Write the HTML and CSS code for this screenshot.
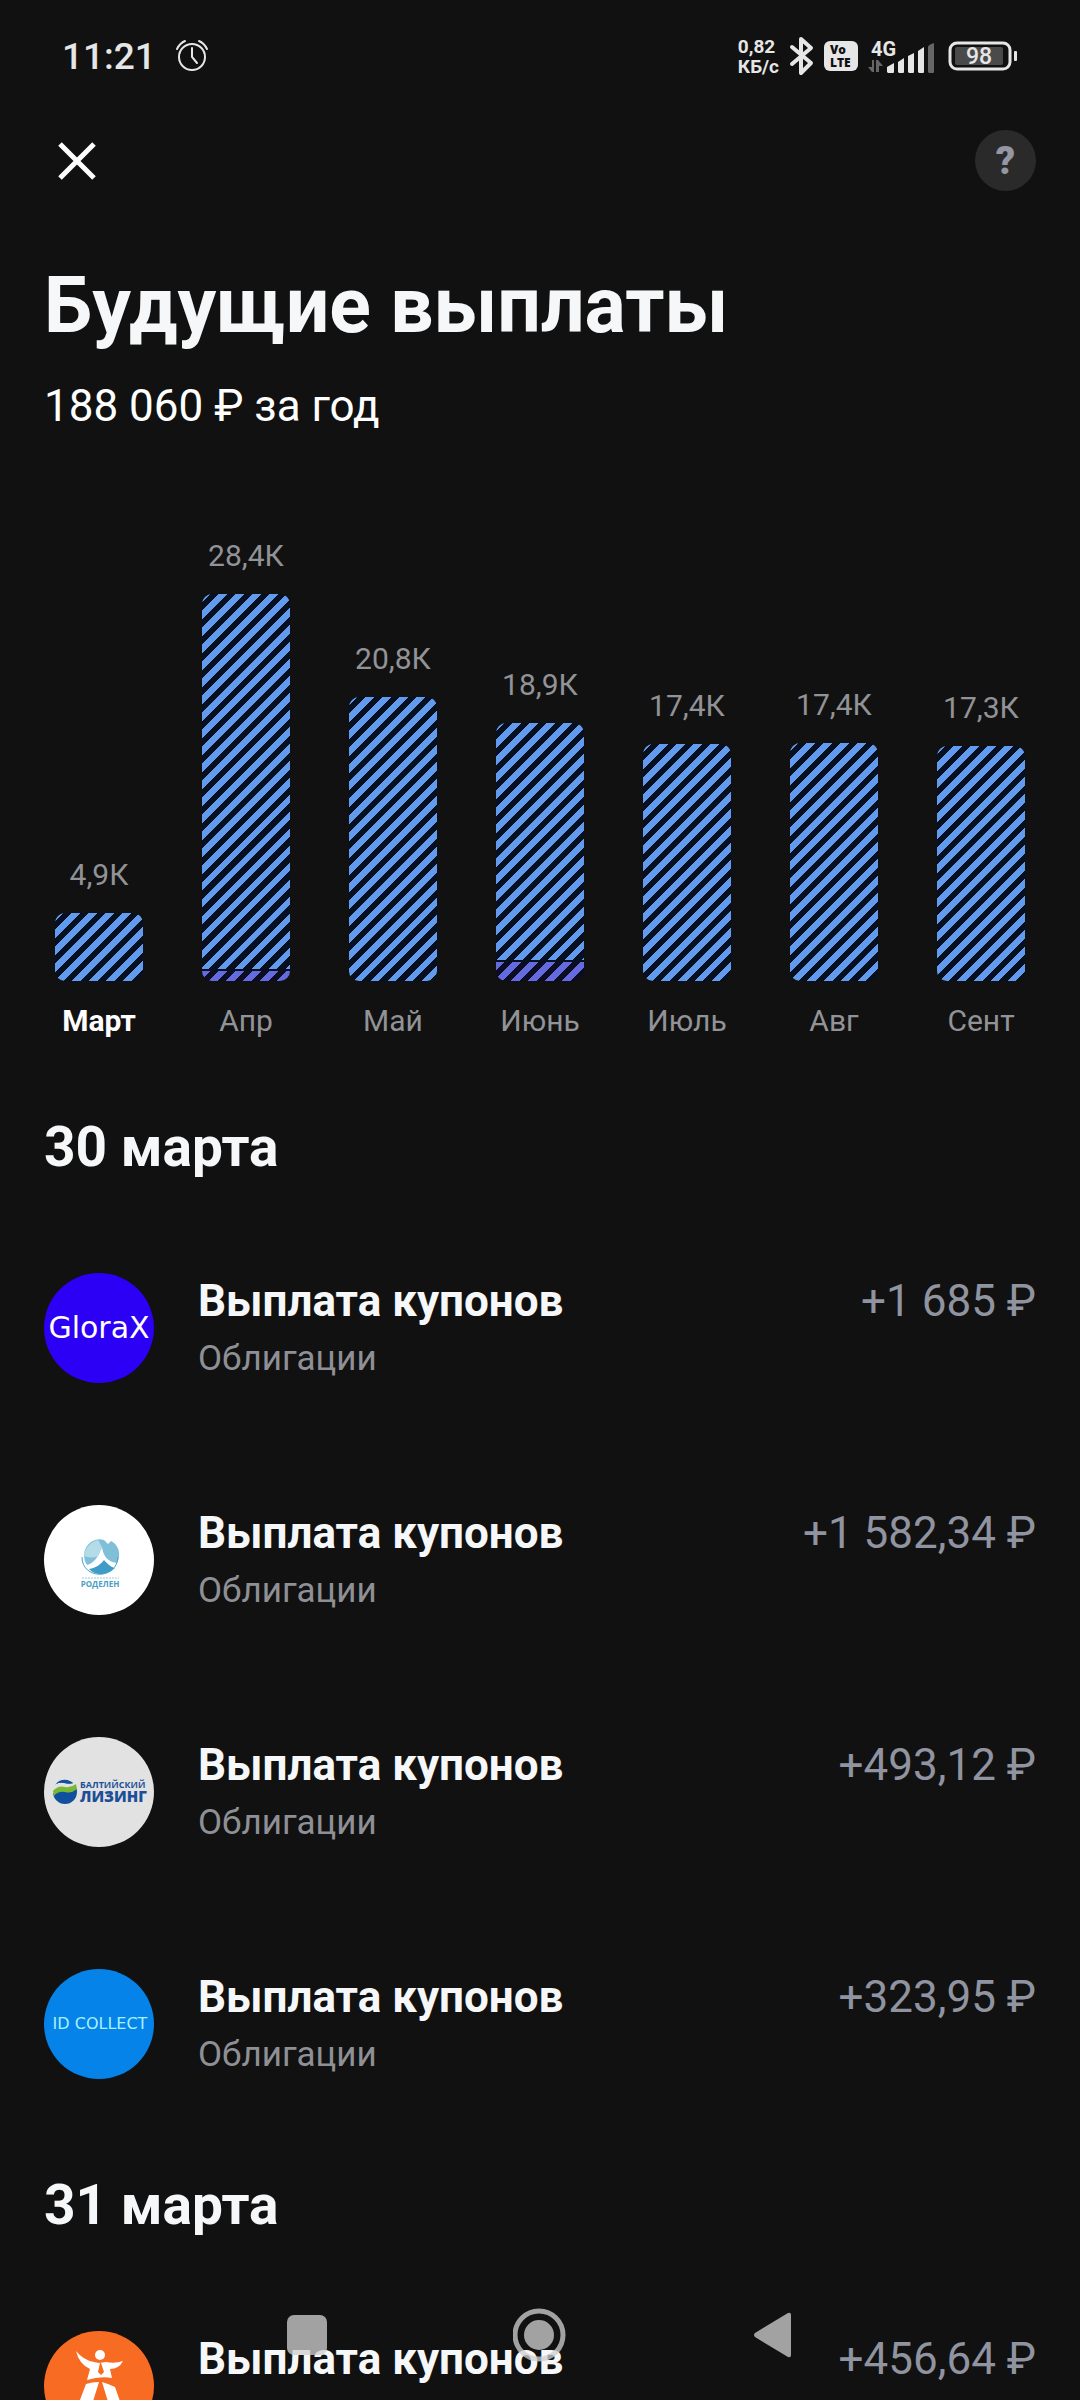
FILE: index.html
```html
<!DOCTYPE html>
<html lang="ru">
<head>
    <meta charset="UTF-8">
    <meta name="viewport" content="width=device-width, initial-scale=1.0">
    <title>Будущие выплаты</title>
    <link rel="stylesheet" href="styles.css">
</head>
<body>
<div class="app">
    <div class="status">
        <span class="clock">11:21</span>
        <svg class="alarm" width="34" height="34" viewBox="0 0 34 34" fill="none" stroke="#e6e6e6" stroke-width="2" stroke-linecap="round">
            <circle cx="17" cy="18" r="13"/>
            <path d="M17 9v9l5 6M2 10Q5 4 10 2M32 10Q29 4 24 2"/>
        </svg>
        <span class="speed">0,82<br>КБ/с</span>
        <svg class="bluetooth" width="26" height="40" viewBox="0 0 26 40" fill="none" stroke="#e6e6e6" stroke-width="4" stroke-linejoin="round" stroke-linecap="round">
            <path d="M3 11l19 16-10 10V3l10 9L3 28"/>
        </svg>
        <span class="volte">Vo<br>LTE</span>
        <svg class="signal" width="68" height="36" viewBox="0 0 68 36">
            <text class="signal-text" x="3" y="18">4G</text>
            <path fill="#666" d="M0 29l4 5h2V22H4v7zM8 34V22h2l5 6h-4v6z"/>
            <path fill="#e6e6e6" d="M19 34v-5l7-4v9a1 1 0 0 1-1 1h-5zM30 34V24l6-4v14a1 1 0 0 1-1 1h-4zM40 34V18l6-3v19a1 1 0 0 1-1 1h-4zM50 34V13l6-4v25a1 1 0 0 1-1 1h-4z"/>
            <path fill="#666" d="M60 34V9q0-2 6-4v29a1 1 0 0 1-1 1h-4z"/>
        </svg>
        <svg class="battery" width="70" height="30" viewBox="0 0 70 30">
            <rect x="2" y="2" width="60" height="26" rx="7" fill="none" stroke="#e6e6e6" stroke-width="3"/>
            <rect x="7" y="6" width="48" height="18" rx="2" fill="#4a4a4a"/>
            <rect x="66" y="10" width="3" height="10" rx="1" fill="#e6e6e6"/>
            <text class="battery-text" x="31" y="23" text-anchor="middle">98</text>
        </svg>
    </div>

    <header class="toolbar">
        <button class="close" type="button" aria-label="Закрыть">
            <svg width="38" height="38" viewBox="0 0 38 38" stroke="#fff" stroke-width="5"><path d="M2 2l34 34M36 2L2 36"/></svg>
        </button>
        <button class="help" type="button">?</button>
    </header>

    <main>
        <h1>Будущие выплаты</h1>
        <p class="total">188 060 ₽ за год</p>

        <ul class="chart">
            <li class="month current">
                <span class="value">4,9К</span>
                <div class="bar" style="height: 68px"><i class="coupons"></i></div>
                <span class="name">Март</span>
            </li>
            <li class="month">
                <span class="value">28,4К</span>
                <div class="bar" style="height: 387px"><i class="coupons"></i><i class="dividends" style="height: 10px"></i></div>
                <span class="name">Апр</span>
            </li>
            <li class="month">
                <span class="value">20,8К</span>
                <div class="bar" style="height: 284px"><i class="coupons"></i></div>
                <span class="name">Май</span>
            </li>
            <li class="month">
                <span class="value">18,9К</span>
                <div class="bar" style="height: 258px"><i class="coupons"></i><i class="dividends" style="height: 19px"></i></div>
                <span class="name">Июнь</span>
            </li>
            <li class="month">
                <span class="value">17,4К</span>
                <div class="bar" style="height: 237px"><i class="coupons"></i></div>
                <span class="name">Июль</span>
            </li>
            <li class="month">
                <span class="value">17,4К</span>
                <div class="bar" style="height: 238px"><i class="coupons"></i></div>
                <span class="name">Авг</span>
            </li>
            <li class="month">
                <span class="value">17,3К</span>
                <div class="bar" style="height: 235px"><i class="coupons"></i></div>
                <span class="name">Сент</span>
            </li>
        </ul>

        <section>
            <h2>30 марта</h2>
            <ul class="payments">
                <li class="payment">
                    <svg class="logo" viewBox="0 0 110 110">
                        <circle cx="55" cy="55" r="55" fill="#2c00f5"/>
                        <text class="logo-glorax" x="55" y="65" text-anchor="middle">GloraX</text>
                    </svg>
                    <div class="info">
                        <h3>Выплата купонов</h3>
                        <p>Облигации</p>
                    </div>
                    <span class="amount">+1 685 ₽</span>
                </li>
                <li class="payment">
                    <svg class="logo" viewBox="0 0 110 110">
                        <circle cx="55" cy="55" r="55" fill="#fff"/>
                        <path fill="#7fbfd8" d="M60 35C50 32 40 40 40 51q0 5 3 9c8-2 12-10 15-18 1 8 5 15 15 16 5-9 1-19-6-22l-3 3z"/>
                        <path fill="#b3dbe8" d="M40 51c1-9 8-15 14-16l4 7-4 9q-6 3-14 0z"/>
                        <path fill="#3f9cc6" d="M45 64c7-1 12-5 15-9 3 3 6 7 11 8-8 8-20 8-26 1z"/>
                        <path fill="none" stroke="#4aa3c9" d="M38 52c0 23 35 23 36 0"/>
                        <path stroke="#9acbdc" stroke-dasharray="2 1" d="M38 73h37"/>
                        <text class="logo-rodelen" x="56" y="82" text-anchor="middle">РОДЕЛЕН</text>
                    </svg>
                    <div class="info">
                        <h3>Выплата купонов</h3>
                        <p>Облигации</p>
                    </div>
                    <span class="amount">+1 582,34 ₽</span>
                </li>
                <li class="payment">
                    <svg class="logo" viewBox="0 0 110 110">
                        <circle cx="55" cy="55" r="55" fill="#e2e2e3"/>
                        <circle cx="21" cy="55" r="12" fill="#124f9d"/>
                        <path fill="#e2e2e3" d="M8 51q5-7 13-5 6 2 11-1l1 5q-6 5-12 3-7-2-12 4z"/>
                        <path fill="#124f9d" d="M12 47q4-5 11-4 3 1 6 3-5 1-9 0-4-1-8 1z"/>
                        <path fill="#78b833" d="M9 54q5-6 12-4 6 1 11-3l1 5q-6 5-12 3-7-1-11 4z"/>
                        <text class="logo-baltic" x="36" y="51">БАЛТИЙСКИЙ</text>
                        <text class="logo-leasing" x="36" y="65">ЛИЗИНГ</text>
                    </svg>
                    <div class="info">
                        <h3>Выплата купонов</h3>
                        <p>Облигации</p>
                    </div>
                    <span class="amount">+493,12 ₽</span>
                </li>
                <li class="payment">
                    <svg class="logo" viewBox="0 0 110 110">
                        <circle cx="55" cy="55" r="55" fill="#0583e8"/>
                        <text class="logo-collect" x="56" y="60" text-anchor="middle">ID COLLECT</text>
                    </svg>
                    <div class="info">
                        <h3>Выплата купонов</h3>
                        <p>Облигации</p>
                    </div>
                    <span class="amount">+323,95 ₽</span>
                </li>
            </ul>
        </section>

        <section>
            <h2>31 марта</h2>
            <ul class="payments">
                <li class="payment">
                    <svg class="logo" viewBox="0 0 110 110">
                        <circle cx="55" cy="55" r="55" fill="#f86b22"/>
                        <circle cx="56" cy="24" r="5" fill="#fff"/>
                        <path fill="#fff" d="M32 20q7 9 18 11l5 1 7-1q9 2 17-1-4 8-13 8l2 9q-12-2-25 2l3-11Q35 33 32 20z"/>
                        <path fill="#f86b22" d="M56 32l-2 9 3 3 3-3-3-9z"/>
                        <path fill="#fff" d="M42 53q6-2 13-2L43 90H28zM58 51q7 2 13 5l12 34H70z"/>
                    </svg>
                    <div class="info">
                        <h3>Выплата купонов</h3>
                        <p>Облигации</p>
                    </div>
                    <span class="amount">+456,64 ₽</span>
                </li>
            </ul>
        </section>
    </main>
</div>

<!-- Системная навигация поверх списка -->
<nav class="system-nav">
    <button type="button" aria-label="Недавние">
        <svg width="54" height="54" viewBox="0 0 54 54"><rect x="6" y="7" width="40" height="40" rx="7"/></svg>
    </button>
    <button type="button" aria-label="Домой">
        <svg width="54" height="54" viewBox="0 0 54 54"><circle class="ring" cx="26" cy="27" r="24"/><circle cx="26" cy="27" r="15"/></svg>
    </button>
    <button type="button" aria-label="Назад">
        <svg width="54" height="54" viewBox="0 0 54 54"><path d="M10 25L43 5q3-1 3 2v40q0 3-3 2L10 29q-2-2 0-4z"/></svg>
    </button>
</nav>
</body>
</html>
```
FILE: styles.css
```css
* {
    box-sizing: border-box;
}

body {
    margin: 0;
    background-color: #111;
    color: #f6f7f8;
    font-family: Roboto, sans-serif;
}

h1, h2, h3, p, ul {
    margin: 0;
    padding: 0;
}

ul {
    list-style: none;
}

button {
    padding: 0;
    border: none;
    background: none;
    cursor: pointer;
}

svg {
    display: block;
    flex-shrink: 0;
}

.app {
    height: 100vh;
    overflow: hidden;
}

/* Статус-бар */
.status {
    display: flex;
    align-items: center;
    height: 112px;
    padding: 0 62px;
    color: #e6e6e6;
}

.clock {
    font-size: 37px;
    font-weight: 500;
}

.alarm {
    margin-left: 19px;
}

.speed {
    margin-left: auto;
    padding-top: 2px;
    font-size: 19px;
    font-weight: 700;
    line-height: 20px;
}

.bluetooth {
    margin-left: 10px;
}

.volte {
    width: 34px;
    height: 30px;
    margin-left: 9px;
    padding: 2px 0 0 6px;
    border-radius: 6px;
    background-color: #e6e6e6;
    color: #111;
    font-family: "Open Sans", sans-serif;
    font-size: 12px;
    font-weight: 800;
    line-height: 13px;
}

.signal {
    margin-left: 10px;
}

.signal-text {
    fill: #e6e6e6;
    font-size: 20px;
    font-weight: 700;
}

.battery {
    margin-left: 12px;
}

.battery-text {
    fill: #e6e6e6;
    font-size: 23px;
    font-weight: 500;
}

.toolbar {
    display: flex;
    align-items: center;
    justify-content: space-between;
    height: 97px;
    padding: 0 44px 0 58px;
}

.help {
    width: 61px;
    height: 61px;
    border-radius: 50%;
    background-color: #2a2a2a;
    color: #9497a3;
    font: 900 38px Roboto, sans-serif;
}

main {
    padding: 47px 44px 0;
}

h1 {
    font-size: 77px;
    line-height: 100px;
}

.total {
    padding-top: 20px;
    color: #fff;
    font-size: 44px;
    line-height: 60px;
}

/* График */
.chart {
    display: flex;
    align-items: flex-end;
    justify-content: space-between;
    height: 605px;
    margin-bottom: 41px;
    padding: 0 11px;
}

.month {
    display: flex;
    flex-direction: column;
    align-items: center;
    width: 88px;
    color: #929397;
    font-size: 30px;
    line-height: 40px;
    white-space: nowrap;
}

.current .name {
    color: #fff;
    font-weight: 700;
}

.bar {
    display: flex;
    flex-direction: column;
    gap: 2px;
    width: 100%;
    margin: 18px 0 20px;
    border-radius: 10px;
    background-color: #071020;
    overflow: hidden;
}

.coupons {
    flex: 1;
    background: repeating-linear-gradient(135deg, #629bed 0 6px, #071020 6px 12px);
}

.dividends {
    background: repeating-linear-gradient(135deg, #636bdf 0 6px, #0c0d22 6px 12px);
}

/* Список выплат */
h2 {
    padding-top: 29px;
    font-size: 55px;
    line-height: 72px;
}

.payments {
    padding-top: 29px;
}

.payment {
    display: flex;
    align-items: flex-start;
    height: 232px;
    padding-top: 61px;
}

.logo {
    width: 110px;
    height: 110px;
}

.info {
    flex: 1;
    margin-left: 44px;
}

h3 {
    font-size: 44px;
    line-height: 56px;
}

.info p {
    color: #8e9095;
    font-size: 35px;
    line-height: 60px;
}

.amount {
    color: #9093a0;
    font-size: 44px;
    line-height: 56px;
}

.logo-glorax {
    fill: #fff;
    font: 30px "DejaVu Sans", sans-serif;
}

.logo-rodelen {
    fill: #4a9fc4;
    font: 700 8px "Open Sans", sans-serif;
}

.logo-baltic {
    fill: #1c4f97;
    font: 700 9px "Open Sans", sans-serif;
}

.logo-leasing {
    fill: #1c4f97;
    font: 800 15px "Open Sans", sans-serif;
}

.logo-collect {
    fill: #a8f0ff;
    font: 16px "DejaVu Sans", sans-serif;
}

.system-nav {
    position: fixed;
    left: 0;
    right: 0;
    bottom: 0;
    display: flex;
    align-items: center;
    justify-content: center;
    gap: 178px;
    height: 130px;
}

.system-nav svg {
    fill: rgba(207, 207, 207, 0.77);
}

.system-nav .ring {
    fill: none;
    stroke: rgba(207, 207, 207, 0.77);
    stroke-width: 5;
}
```
